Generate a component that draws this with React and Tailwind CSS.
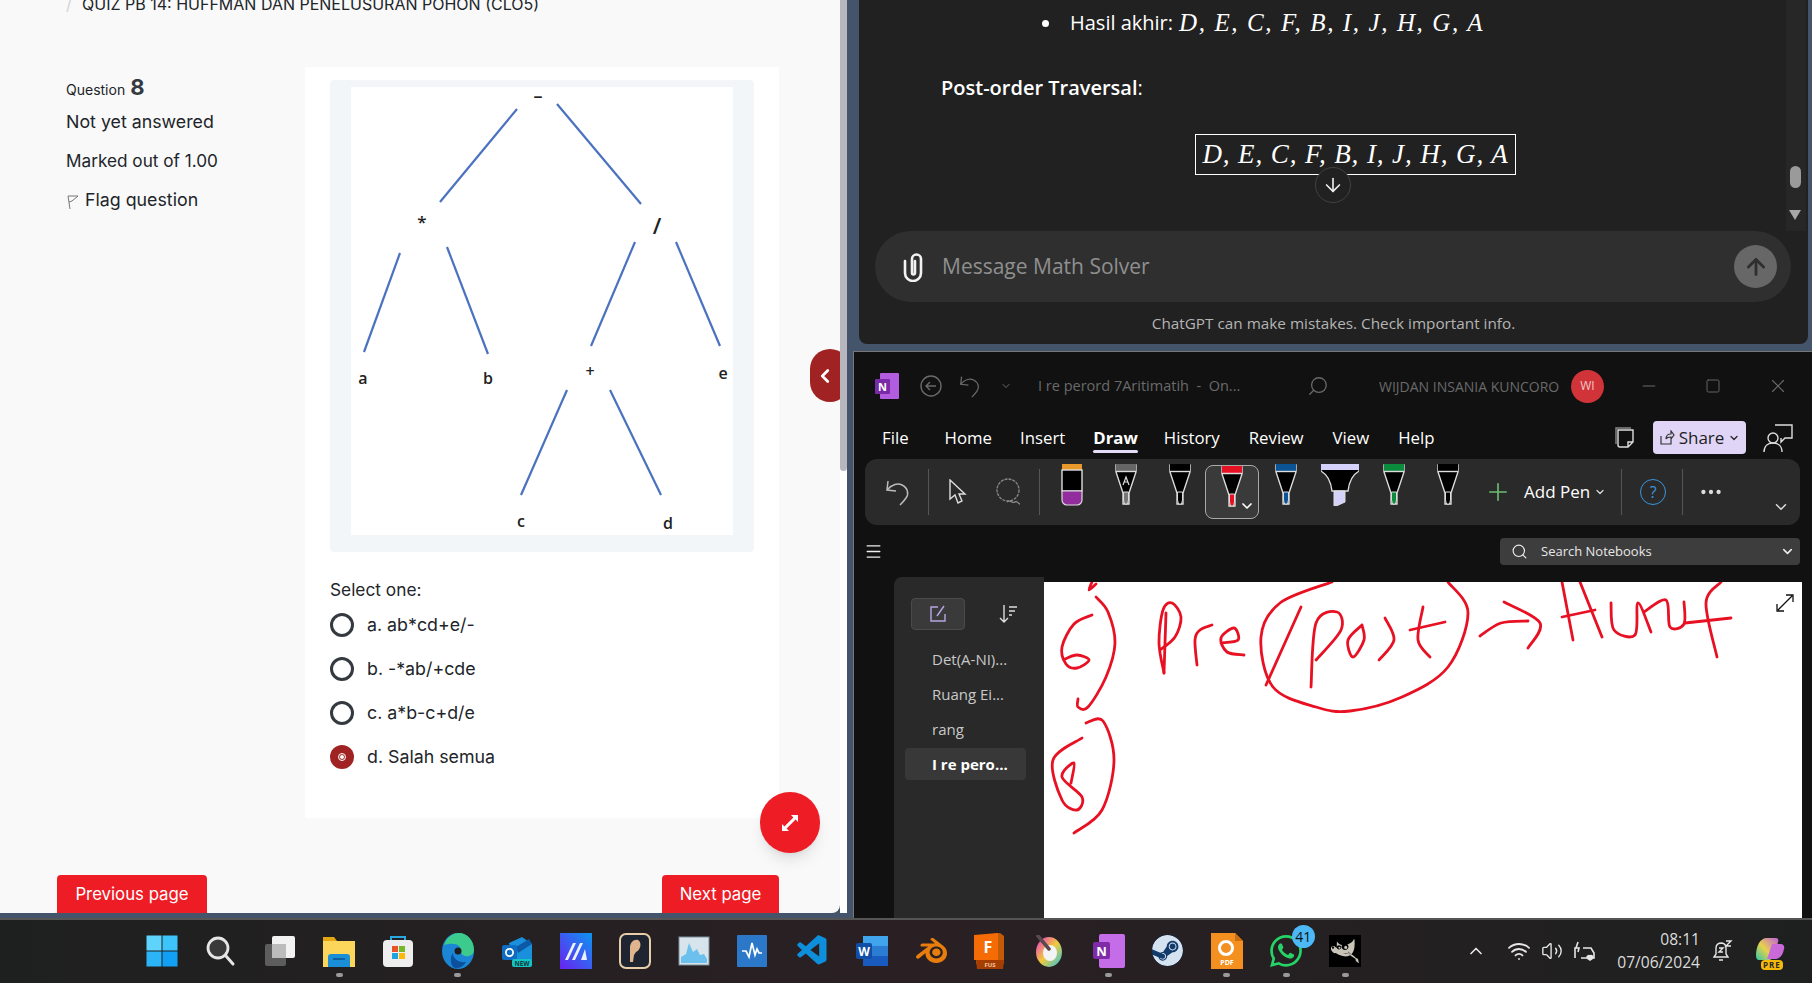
import { SiBlender, SiSteam, SiWhatsapp, SiGimp } from "react-icons/si";
import { VscVscode } from "react-icons/vsc";
import { ChevronLeft, ChevronDown, ChevronUp, ArrowDown, ArrowUp, Plus, Minus, Square, X, Menu, Search, MoreHorizontal, Wifi, Volume2 } from "lucide-react";

/* =============================
   HELPERS
============================== */

// puntos -> curva suave (catmull-rom) para la tinta
const inkPath = (pts) => {
  let d = `M${pts[0][0]} ${pts[0][1]}`;
  for (let i = 0; i < pts.length - 1; i++) {
    const p0 = pts[i - 1] || pts[i];
    const p1 = pts[i];
    const p2 = pts[i + 1];
    const p3 = pts[i + 2] || p2;
    const c1 = [p1[0] + (p2[0] - p0[0]) / 6, p1[1] + (p2[1] - p0[1]) / 6];
    const c2 = [p2[0] - (p3[0] - p1[0]) / 6, p2[1] - (p3[1] - p1[1]) / 6];
    d += ` C${c1[0]} ${c1[1]} ${c2[0]} ${c2[1]} ${p2[0]} ${p2[1]}`;
  }
  return d;
};

const strokes = [
  [[48, 0], [45, 8], [52, 2]],
  [[48, 33], [30, 42], [18, 65], [22, 82], [33, 86], [45, 78], [33, 73], [21, 77]],
  [[52, 15], [64, 30], [71, 61], [62, 95], [44, 125], [34, 125], [34, 117]],
  [[120, 91], [115, 61], [119, 28], [128, 21], [137, 35], [131, 55], [116, 68]],
  [[122, 31], [120, 91]],
  [[153, 83], [151, 58], [156, 48], [168, 43]],
  [[177, 61], [194, 58], [190, 46], [177, 56], [183, 70], [200, 73]],
  [[257, 25], [222, 103]],
  [[288, 0], [236, 21], [217, 55], [229, 105], [272, 125], [306, 129], [358, 115], [404, 85], [424, 31], [404, 0]],
  [[267, 105], [272, 41], [293, 30], [297, 48], [272, 78]],
  [[318, 43], [304, 58], [309, 75], [320, 58], [318, 43]],
  [[341, 36], [350, 58], [335, 78]],
  [[379, 25], [374, 58], [386, 75]],
  [[366, 48], [401, 40]],
  [[436, 54], [457, 41], [484, 39]],
  [[460, 20], [496, 41], [484, 66]],
  [[518, 0], [529, 58]],
  [[518, 35], [551, 28]],
  [[536, 0], [558, 55]],
  [[567, 21], [570, 48], [591, 53], [594, 21], [607, 50]],
  [[600, 30], [622, 18], [626, 45], [640, 42], [640, 20]],
  [[677, 0], [662, 21], [673, 75]],
  [[641, 41], [687, 36]],
  [[38, 156], [9, 178], [18, 218], [33, 228], [38, 215], [18, 195], [30, 181], [27, 201]],
  [[42, 141], [59, 139], [70, 178], [58, 228], [30, 251]],
];

function TreeImage() {
  const lines = [
    [166, 22, 89, 115], [206, 17, 290, 117], [49, 166, 13, 265], [96, 160, 137, 267],
    [284, 155, 240, 259], [325, 155, 369, 259], [216, 303, 170, 408], [259, 303, 310, 408],
  ];
  const labels = [
    ["–", 187, 15, 18], ["*", 71, 141, 17], ["/", 306, 147, 22], ["a", 12, 297, 16], ["b", 137, 297, 16],
    ["+", 239, 290, 16], ["e", 372, 292, 16], ["c", 170, 440, 16], ["d", 317, 442, 16],
  ];
  return (
    <svg viewBox="0 0 382 448" className="w-[382px] h-[448px] block bg-white">
      {lines.map((l, i) => (
        <line key={i} x1={l[0]} y1={l[1]} x2={l[2]} y2={l[3]} stroke="#4a72c0" strokeWidth="2.2" />
      ))}
      {labels.map((l, i) => (
        <text key={i} x={l[1]} y={l[2]} fontSize={l[3]} fontWeight="600" textAnchor="middle" fill="#222" fontFamily="Open Sans, sans-serif">{l[0]}</text>
      ))}
    </svg>
  );
}

function Radio({ label, checked }) {
  return (
    <div className="flex items-center h-[24px] gap-[13px] mb-[20px] last:mb-0">
      {checked ? (
        <span className="w-[24px] h-[24px] rounded-full bg-[#a02222] flex items-center justify-center">
          <span className="w-[6px] h-[6px] rounded-full bg-white border border-[#a02222] outline-1 outline-white"></span>
        </span>
      ) : (
        <span className="w-[24px] h-[24px] rounded-full border-[3px] border-[#343a40]"></span>
      )}
      <span>{label}</span>
    </div>
  );
}

function UndoCurl({ size, color, width }) {
  return (
    <svg width={size} height={size} viewBox="0 0 28 28" fill="none" stroke={color} strokeWidth={width}>
      <path d="M3 3l-1 9 9 1" />
      <path d="M2 12c5-6 11-7 15-5 6 3 7 9 4 13-2 3-4 5-6 7" />
    </svg>
  );
}

function Pen({ band, tip, a }) {
  return (
    <svg width="24" height="42" viewBox="0 0 24 42">
      <path d="M2 1h20v7l-7 21v11h-6V29L2 8z" fill="#000" stroke="#ddd" strokeWidth="1.4" />
      <rect x="2" y="0" width="20" height="7" fill={band} />
      <line x1="2" y1="7.5" x2="22" y2="7.5" stroke="#ddd" strokeWidth="1.4" />
      <path d="M9.5 28h5v8l-1 4h-3l-1-4z" fill={tip} stroke="#ddd" strokeWidth="1" />
      {a && <path d="M9 21l3-8 3 8M10 18h4" fill="none" stroke="#ddd" strokeWidth="1.2" />}
    </svg>
  );
}

function Highlighter() {
  return (
    <svg width="38" height="42" viewBox="0 0 38 42">
      <path d="M0 0h38v7c-7 4-10 11-11 20H11C10 18 7 11 0 7z" fill="#000" stroke="#ddd" strokeWidth="1.4" />
      <rect x="0" y="0" width="38" height="6" fill="#d4d2fa" />
      <path d="M13 27h11v11l-11 5z" fill="#d4d2fa" stroke="#ddd" strokeWidth="1" />
    </svg>
  );
}

function Eraser() {
  return (
    <svg width="22" height="42" viewBox="0 0 22 42">
      <rect x="1" y="0" width="20" height="6" fill="#e8992a" />
      <rect x="1" y="6" width="20" height="21" fill="#000" stroke="#ddd" strokeWidth="1.4" />
      <path d="M1 27h20v9a5 5 0 0 1-5 5H6a5 5 0 0 1-5-5z" fill="#912d9c" stroke="#ddd" strokeWidth="1.2" />
    </svg>
  );
}

/* =============================
   ICONOS DE LA BARRA DE TAREAS
============================== */
const TaskIcons = {
  start: (
    <svg width="32" height="32" viewBox="0 0 32 32">
      <rect x="0.5" y="0.5" width="15" height="15" fill="#5ed4fc" />
      <rect x="16.5" y="0.5" width="15" height="15" fill="#3cc4fb" />
      <rect x="0.5" y="16.5" width="15" height="15" fill="#2bb4f8" />
      <rect x="16.5" y="16.5" width="15" height="15" fill="#12a0f5" />
    </svg>
  ),
  search: (
    <svg width="32" height="32" viewBox="0 0 32 32">
      <circle cx="13" cy="13" r="10" fill="#3a3a3a" stroke="#e6e6e6" strokeWidth="2.8" />
      <path d="M21 21l7 8" stroke="#e6e6e6" strokeWidth="3" strokeLinecap="round" />
    </svg>
  ),
  tasks: (
    <svg width="32" height="32" viewBox="0 0 32 32">
      <rect x="1" y="9" width="21" height="22" rx="2" fill="#5d5d5d" />
      <rect x="8" y="1" width="23" height="22" rx="2" fill="#f2f2f2" />
      <rect x="8" y="9" width="14" height="14" fill="#bcbcbc" />
    </svg>
  ),
  files: (
    <svg width="32" height="32" viewBox="0 0 32 32">
      <path d="M0 2h11l3 4h18v26H0z" fill="#e5a711" />
      <rect x="0" y="6" width="32" height="26" fill="#fbd65b" />
      <path d="M5 32V22a3 3 0 0 1 3-3h16a3 3 0 0 1 3 3v10z" fill="#1b8ed8" />
      <rect x="10" y="23" width="12" height="2" fill="#0d5fa3" />
    </svg>
  ),
  store: (
    <svg width="32" height="32" viewBox="0 0 32 32">
      <path d="M9 6V2h14v4" fill="none" stroke="#28a7e0" strokeWidth="2" />
      <rect x="1" y="5" width="30" height="27" rx="4" fill="#eeeeee" />
      <rect x="10" y="11" width="6" height="6" fill="#e8532c" />
      <rect x="17" y="11" width="6" height="6" fill="#77b82a" />
      <rect x="10" y="18" width="6" height="6" fill="#1fa2e0" />
      <rect x="17" y="18" width="6" height="6" fill="#fbb90c" />
    </svg>
  ),
  edge: (
    <svg width="32" height="36" viewBox="0 0 32 36">
      <ellipse cx="16" cy="18" rx="16" ry="18" fill="#1b85d6" />
      <path d="M2 12C5 3 12 0 17 0c9 0 15 8 15 17 0 5-5 7-9 6-3-1-4-2-4-5 0-6-6-9-17-6z" fill="#3ccb8c" />
      <path d="M11 20c0 6 6 10 13 9-3 5-8 7-11 6-4-1-6-10-2-15z" fill="#0c4f9c" />
      <circle cx="16" cy="18" r="3.5" fill="#1e1e1e" />
    </svg>
  ),
  outlook: (
    <svg width="32" height="32" viewBox="0 0 32 32">
      <path d="M8 8l13-6 10 7v16H12z" fill="#1a8fdc" />
      <path d="M15 12l13-8 3 5-14 9z" fill="#0c5aa6" />
      <rect x="1" y="10" width="15" height="15" rx="2" fill="#0f6cc0" />
      <circle cx="8.5" cy="17.5" r="3.6" fill="none" stroke="#fff" strokeWidth="1.8" />
      <rect x="11" y="24" width="20" height="8" rx="2" fill="#15c4c4" />
      <text x="21" y="30.5" fontSize="6.5" fontWeight="700" textAnchor="middle" fill="#103a3a" fontFamily="Open Sans, sans-serif">NEW</text>
    </svg>
  ),
  ms: (
    <svg width="32" height="36" viewBox="0 0 32 36">
      <defs>
        <linearGradient id="msg" x1="1" y1="0" x2="0" y2="1">
          <stop offset="0" stopColor="#0c95f0" />
          <stop offset="1" stopColor="#6a22f2" />
        </linearGradient>
      </defs>
      <rect width="32" height="36" fill="url(#msg)" />
      <path d="M5 27L13 10h3L8 27zM12 27l8-17h3l-8 17zM21 27l4-11 2 11z" fill="#eaf1ff" />
    </svg>
  ),
  penbook: (
    <svg width="32" height="36" viewBox="0 0 32 36">
      <rect x="1" y="1" width="30" height="34" rx="6" fill="#1f2530" stroke="#e8cdaa" strokeWidth="2" />
      <path d="M11 29V15c0-6 4-9 8-8 4 2 3 10-2 12l-2 3-1 7z" fill="#e0b48c" />
    </svg>
  ),
  monitor: (
    <svg width="32" height="32" viewBox="0 0 32 32">
      <rect x="1" y="2" width="30" height="28" fill="#d8e4ec" stroke="#7d8d99" />
      <path d="M3 22l5-3 3-11 4 9 4-3 3 6 4-1 3 5v4H3z" fill="#6cc0ee" />
    </svg>
  ),
  wave: (
    <svg width="32" height="34" viewBox="0 0 32 34">
      <rect width="30" height="32" y="1" rx="1" fill="#2b78c8" />
      <path d="M5 17h4l3 6 3-14 3 12 2-6 2 4h3" fill="none" stroke="#fff" strokeWidth="1.7" />
    </svg>
  ),
  word: (
    <svg width="32" height="32" viewBox="0 0 32 32">
      <rect x="7" y="1" width="25" height="10" fill="#41a5ee" />
      <rect x="7" y="11" width="25" height="10" fill="#2b7cd3" />
      <rect x="7" y="21" width="25" height="10" fill="#185abd" />
      <rect x="0" y="8" width="16" height="16" rx="2" fill="#114ea6" />
      <text x="8" y="21" fontSize="12" fontWeight="700" textAnchor="middle" fill="#fff" fontFamily="Open Sans, sans-serif">W</text>
    </svg>
  ),
  fus: (
    <svg width="32" height="36" viewBox="0 0 32 36">
      <path d="M2 3l24-3 4 3v28H2z" fill="#c25a08" />
      <path d="M0 2l24-2v27H0z" fill="#f56b05" />
      <path d="M2 27h28l-1 9H3z" fill="#a53e02" />
      <text x="14" y="20" fontSize="16" fontWeight="700" textAnchor="middle" fill="#fff" fontFamily="Open Sans, sans-serif">F</text>
      <text x="16" y="34" fontSize="6" fontWeight="700" textAnchor="middle" fill="#f3c9a3" fontFamily="Open Sans, sans-serif">FUS</text>
    </svg>
  ),
  krita: (
    <svg width="32" height="32" viewBox="0 0 32 32">
      <defs>
        <linearGradient id="kg" x1="0" y1="0" x2="1" y2="1">
          <stop offset="0" stopColor="#e82fd5" />
          <stop offset="0.5" stopColor="#f2c93b" />
          <stop offset="1" stopColor="#22c5e8" />
        </linearGradient>
      </defs>
      <ellipse cx="16" cy="17" rx="13" ry="15" fill="url(#kg)" />
      <ellipse cx="17" cy="18" rx="7" ry="8" fill="#f4f4f4" />
      <path d="M5 1l11 13" stroke="#5a4a50" strokeWidth="3.5" strokeLinecap="round" />
    </svg>
  ),
  onenote: (
    <svg width="32" height="34" viewBox="0 0 32 34">
      <rect x="6" y="0" width="26" height="34" rx="2" fill="#c56ce8" />
      <rect x="0" y="8" width="17" height="17" rx="2" fill="#7f2aa8" />
      <text x="8.5" y="21.5" fontSize="13" fontWeight="700" textAnchor="middle" fill="#fff" fontFamily="Open Sans, sans-serif">N</text>
    </svg>
  ),
  foxit: (
    <svg width="32" height="36" viewBox="0 0 32 36">
      <path d="M0 0h24l8 8v28H0z" fill="#f49020" />
      <path d="M24 0v8h8z" fill="#c96f10" />
      <circle cx="15" cy="15" r="6.5" fill="none" stroke="#fff" strokeWidth="3" />
      <text x="16" y="32" fontSize="7" fontWeight="700" textAnchor="middle" fill="#fff" fontFamily="Open Sans, sans-serif">PDF</text>
    </svg>
  ),
};

const dock = [
  { id: "start", icon: TaskIcons.start },
  { id: "search", icon: TaskIcons.search },
  { id: "tasks", icon: TaskIcons.tasks },
  { id: "files", icon: TaskIcons.files, open: true },
  { id: "store", icon: TaskIcons.store },
  { id: "edge", icon: TaskIcons.edge, open: true },
  { id: "outlook", icon: TaskIcons.outlook },
  { id: "ms", icon: TaskIcons.ms },
  { id: "penbook", icon: TaskIcons.penbook },
  { id: "monitor", icon: TaskIcons.monitor },
  { id: "wave", icon: TaskIcons.wave },
  { id: "vscode", icon: <VscVscode size={36} color="#0e8fdc" /> },
  { id: "word", icon: TaskIcons.word },
  { id: "blender", icon: <SiBlender size={31} color="#e87d0d" /> },
  { id: "fus", icon: TaskIcons.fus },
  { id: "krita", icon: TaskIcons.krita },
  { id: "onenote", icon: TaskIcons.onenote, open: true },
  { id: "steam", icon: <SiSteam size={31} color="#d5e3f0" className="bg-[#123a6b] rounded-full" /> },
  { id: "foxit", icon: TaskIcons.foxit, open: true },
  { id: "whatsapp", icon: <SiWhatsapp size={32} color="#25d366" />, open: true, badge: "41" },
  { id: "gimp", icon: <span className="bg-black w-[32px] h-[32px] flex items-center justify-center"><SiGimp size={28} color="#c9c4b8" /></span>, open: true },
];

const tabs = ["File", "Home", "Insert", "Draw", "History", "Review", "View", "Help"];
const tabMargins = ["", "ml-[36px]", "ml-[28px]", "ml-[28px]", "ml-[26px]", "ml-[29px]", "ml-[29px]", "ml-[29px]"];

const serif = "font-['Liberation_Serif',serif] italic";
const answer = "D, E, C, F, B, I, J, H, G, A";

export default function App() {
  return (
    <div className="w-[1812px] h-[983px] overflow-hidden flex flex-col bg-[#44546a] font-['Open_Sans',sans-serif]">
      <div className="flex h-[918px] shrink-0">
        {/* ===== MOODLE ===== */}
        <div className="w-[847px] h-[913px] flex shrink-0 font-['Inter',sans-serif] text-[#212529]">
          <div className="w-[840px] relative bg-[#f9f9f9] rounded-br-lg overflow-hidden">
            <div className="-mt-[7px] pl-[66px] flex gap-[8px] text-[16px] leading-[22px] h-[74px]">
              <span className="text-[#ced4da] absolute left-[66px]">/</span>
              <span className="ml-[16px]">QUIZ PB 14: HUFFMAN DAN PENELUSURAN POHON (CLO5)</span>
            </div>

            <div className="flex">
              <div className="w-[305px] pl-[66px] pt-[4px] shrink-0">
                <div className="flex items-baseline gap-[5px] h-[31px]">
                  <span className="text-[14px]">Question</span>
                  <span className="text-[22px] font-bold text-[#343a40]">8</span>
                </div>
                <div className="text-[17.8px] leading-[39px]">Not yet answered</div>
                <div className="text-[17.2px] leading-[39px]">Marked out of 1.00</div>
                <div className="text-[17.8px] leading-[39px] flex items-center gap-[6px]">
                  <svg width="13" height="16" viewBox="0 0 13 16" className="mt-[4px]">
                    <path d="M2 2h10L6 7l-3 1M2 2l2 13" fill="none" stroke="#777" />
                  </svg>
                  Flag question
                </div>
              </div>

              <div className="w-[474px] h-[751px] bg-white px-[25px] pt-[13px] text-[17.8px] shrink-0">
                <div className="w-[424px] h-[472px] rounded bg-[#f3f6f9] px-[21px] pt-[7px]">
                  <TreeImage />
                </div>
                <div className="mt-[25px] mb-[8px] leading-[26px] text-[17.3px]">Select one:</div>
                <div className="pt-[2px]">
                  <Radio label="a. ab*cd+e/-" />
                  <Radio label="b. -*ab/+cde" />
                  <Radio label="c. a*b-c+d/e" />
                  <Radio label="d. Salah semua" checked />
                </div>
              </div>
            </div>

            <div className="absolute left-[57px] right-[61px] bottom-0 flex justify-between text-white text-[16.8px]">
              <button className="h-[38px] w-[150px] bg-[#ee1c25] rounded-t-sm pt-[2px]">Previous page</button>
              <button className="h-[38px] w-[117px] bg-[#ee1c25] rounded-t-sm pt-[2px]">Next page</button>
            </div>

            {/* tab lateral y boton flotante */}
            <div className="absolute left-[810px] top-[349px] w-[40px] h-[53px] rounded-full bg-[#a02222] flex items-center pl-[4px]">
              <ChevronLeft size={22} color="#fff" strokeWidth={3} />
            </div>
            <div className="absolute left-[760px] top-[792px] w-[60px] h-[61px] rounded-full bg-[#ee1c25] shadow-lg flex items-center justify-center">
              <svg width="20" height="20" viewBox="0 0 20 20" fill="#fff">
                <path d="M11 2h7v7l-2.4-2.4-9 9L9 18H2v-7l2.4 2.4 9-9z" />
              </svg>
            </div>
          </div>
          <div className="w-[7px] bg-white">
            <div className="h-[471px] rounded-b-sm bg-[#b7b7bd]"></div>
          </div>
        </div>

        <div className="flex-1 flex flex-col min-w-0">
          {/* ===== CHATGPT ===== */}
          <div className="h-[344px] ml-[12px] w-[949px] shrink-0 bg-[#212121] rounded-b-lg text-white relative overflow-hidden">
            <div className="h-[231px] relative">
              <div className="flex items-center pl-[183px] h-[46px]">
                <span className="w-[7px] h-[7px] rounded-full bg-white"></span>
                <span className="ml-[21px] text-[20px]">Hasil akhir:</span>
                <span className={`${serif} ml-[6px] text-[25px] tracking-[1.6px]`}>{answer}</span>
              </div>
              <div className="pl-[82px] mt-[29px] text-[20px] leading-[26px]"><b className="font-semibold">Post-order Traversal</b>:</div>
              <div className="flex mt-[33px] ml-[336px]">
                <div className={`${serif} w-[321px] h-[41px] border border-white text-[27px] leading-[38px] text-center whitespace-nowrap tracking-[0.9px]`}>{answer}</div>
              </div>
              <div className="absolute left-[456px] top-[167px] w-[36px] h-[36px] rounded-full border border-[#424242] bg-[#212121] flex items-center justify-center">
                <ArrowDown size={22} color="#ececec" strokeWidth={1.8} />
              </div>
              <div className="absolute right-[2px] top-0 bottom-0 w-[20px] bg-[#272727]">
                <div className="absolute left-[4px] top-[166px] w-[11px] h-[22px] rounded-full bg-[#9a9a9a]"></div>
                <div className="absolute left-[3px] top-[210px] border-x-[6px] border-t-[10px] border-x-transparent border-t-[#a8a8a8]"></div>
              </div>
            </div>

            <div className="ml-[16px] w-[916px] h-[71px] rounded-full bg-[#2f2f2f] flex items-center">
              <svg width="24" height="30" viewBox="0 0 24 30" fill="none" stroke="#f2f2f2" strokeWidth="2.6" strokeLinecap="round" className="ml-[26px] shrink-0">
                <path d="M4 9v12a8 8 0 0 0 16 0V7a4.5 4.5 0 0 0-9 0v14a1.5 1.5 0 0 0 3 0V9" />
              </svg>
              <span className="ml-[17px] text-[21px] text-[#8f8f8f] flex-1">Message Math Solver</span>
              <span className="mr-[14px] w-[43px] h-[43px] rounded-full bg-[#676767] flex items-center justify-center">
                <ArrowUp size={26} color="#2f2f2f" strokeWidth={2.6} />
              </span>
            </div>
            <div className="text-center text-[15.3px] text-[#b4b4b4] mt-[10px]">ChatGPT can make mistakes. Check important info.</div>
          </div>

          <div className="h-[8px] ml-[6px] shrink-0 border-b border-[#777]"></div>

          {/* ===== ONENOTE ===== */}
          <div className="flex-1 ml-[6px] w-[959px] border-l border-[#777] bg-[#111111] flex flex-col text-white overflow-hidden">
            {/* titulo */}
            <div className="h-[64px] shrink-0 flex items-center text-[#6a6a6a] text-[14.5px] pt-[4px]">
              <svg width="24" height="26" viewBox="0 0 24 26" className="ml-[21px] shrink-0">
                <rect x="5" y="0" width="19" height="26" rx="1" fill="#b25ce0" />
                <rect x="0" y="6" width="15" height="15" rx="1" fill="#7a2aa6" />
                <text x="7.5" y="17.5" fontSize="11" fontWeight="700" textAnchor="middle" fill="#fff">N</text>
              </svg>
              <svg width="22" height="22" viewBox="0 0 22 22" className="ml-[21px] shrink-0" fill="none" stroke="#6a6a6a" strokeWidth="1.4">
                <circle cx="11" cy="11" r="10" />
                <path d="M16 11H6M10 7l-4 4 4 4" />
              </svg>
              <span className="ml-[17px] shrink-0"><UndoCurl size={24} color="#6a6a6a" width={1.5} /></span>
              <ChevronDown size={12} color="#6a6a6a" className="ml-[17px] shrink-0" />
              <span className="ml-[26px] w-[269px] shrink-0 whitespace-pre">I re perord 7Aritimatih  -  On...</span>
              <Search size={22} color="#6a6a6a" strokeWidth={1.4} className="-scale-x-100 shrink-0" />
              <span className="ml-[50px] w-[192px] shrink-0 text-[14px] whitespace-nowrap">WIJDAN INSANIA KUNCORO</span>
              <span className="w-[33px] h-[33px] rounded-full bg-[#d13438] text-[#f2c6c6] text-[12px] flex items-center justify-center shrink-0">WI</span>
              <Minus size={20} color="#6a6a6a" strokeWidth={1.2} className="ml-[35px] shrink-0" />
              <Square size={16} color="#6a6a6a" strokeWidth={1.4} className="ml-[46px] shrink-0" />
              <X size={22} color="#6a6a6a" strokeWidth={1.2} className="ml-[46px] shrink-0" />
            </div>

            {/* pestanas */}
            <div className="h-[43px] shrink-0 flex items-center pl-[28px] text-[16.8px] relative">
              {tabs.map((t, i) => (
                <span key={t} className={`${tabMargins[i]} relative ${t === "Draw" ? "font-bold" : ""}`}>
                  {t}
                  {t === "Draw" && <span className="absolute left-0 right-0 -bottom-[3px] h-[3px] rounded bg-[#e5dcf8]"></span>}
                </span>
              ))}
              <div className="ml-auto flex items-center mr-[18px]">
                <svg width="22" height="22" viewBox="0 0 22 22" fill="none" stroke="#ddd" strokeWidth="1.4">
                  <path d="M3 3h15v12l-5 5H5a2 2 0 0 1-2-2zM13 20v-5h5" />
                  <path d="M1 17V1h15" stroke="#888" />
                </svg>
                <div className="ml-[16px] w-[93px] h-[33px] rounded bg-[#e0d4f7] text-[#1d1d1d] flex items-center justify-center gap-[4px] text-[17px]">
                  <svg width="16" height="16" viewBox="0 0 16 16" fill="none" stroke="#333" strokeWidth="1.2">
                    <path d="M2 6v8h10V9M7 9c0-4 3-5 5-5V1l3 4-3 4V7c-2 0-4 0-5 2z" />
                  </svg>
                  Share
                  <ChevronDown size={12} color="#222" strokeWidth={2.4} />
                </div>
                <svg width="32" height="30" viewBox="0 0 32 30" fill="none" stroke="#ddd" strokeWidth="1.4" className="ml-[16px]">
                  <circle cx="11" cy="15" r="5" />
                  <path d="M2 29c0-6 4-9 9-9s9 3 9 9M13 2h17v13h-7l-4 4v-4" />
                </svg>
              </div>
            </div>

            {/* ribbon */}
            <div className="ml-[11px] h-[66px] w-[935px] shrink-0 rounded-xl bg-[#2a2a2a] flex items-center text-[18px] pl-[20px] relative">
              <span className="shrink-0"><UndoCurl size={28} color="#bbb" width={1.5} /></span>
              <span className="ml-[15px] h-[46px] w-px bg-[#555] shrink-0"></span>
              <svg width="20" height="26" viewBox="0 0 20 26" fill="none" stroke="#ddd" strokeWidth="1.4" className="ml-[18px] shrink-0">
                <path d="M3 1v19l5-4 3 8 4-2-3-7h6z" />
              </svg>
              <svg width="28" height="28" viewBox="0 0 28 28" fill="none" stroke="#8a8a8a" strokeWidth="1.3" className="ml-[28px] shrink-0">
                <circle cx="13" cy="12" r="11" strokeDasharray="3 1" />
                <path d="M12 24c3-3 6 2 8 0s3 2 5 2" />
              </svg>
              <span className="ml-[16px] h-[46px] w-px bg-[#555] shrink-0"></span>
              <span className="ml-[21px] mt-[-14px] shrink-0"><Eraser /></span>
              <span className="ml-[31px] mt-[-14px] shrink-0"><Pen band="#666" tip="#777" a /></span>
              <span className="ml-[30px] mt-[-14px] shrink-0"><Pen band="#000" tip="#000" /></span>
              <span className="ml-[13px] shrink-0 w-[54px] h-[54px] rounded-lg border border-[#aaa] bg-[#3a3a3a] relative flex justify-center overflow-hidden">
                <Pen band="#e81123" tip="#e81123" />
                <ChevronDown size={16} color="#fff" strokeWidth={2.6} className="absolute right-[3px] bottom-[4px]" />
              </span>
              <span className="ml-[15px] mt-[-14px] shrink-0"><Pen band="#0b5394" tip="#0b5394" /></span>
              <span className="ml-[23px] mt-[-14px] shrink-0"><Highlighter /></span>
              <span className="ml-[23px] mt-[-14px] shrink-0"><Pen band="#0a8c3c" tip="#0a8c3c" /></span>
              <span className="ml-[30px] mt-[-14px] shrink-0"><Pen band="#000" tip="#000" /></span>
              <Plus size={28} color="#6cc070" strokeWidth={1.4} className="ml-[24px] shrink-0" />
              <span className="ml-[12px] shrink-0 whitespace-nowrap text-[17px]">Add Pen</span>
              <ChevronDown size={12} color="#ddd" strokeWidth={2.4} className="ml-[4px] shrink-0" />
              <span className="ml-[15px] h-[46px] w-px bg-[#555] shrink-0"></span>
              <span className="ml-[18px] w-[26px] h-[26px] rounded-full border-[1.5px] border-[#3a96dd] text-[#3a96dd] flex items-center justify-center text-[16px] shrink-0">?</span>
              <span className="ml-[16px] h-[46px] w-px bg-[#555] shrink-0"></span>
              <MoreHorizontal size={26} color="#ddd" className="ml-[15px] shrink-0" />
              <ChevronDown size={18} color="#ddd" className="absolute right-[10px] bottom-[9px]" />
            </div>

            {/* buscador */}
            <div className="h-[52px] shrink-0 flex items-start pt-[13px] pl-[10px] relative">
              <Menu size={19} color="#eee" strokeWidth={1.6} className="mt-[4px]" />
              <div className="absolute left-[646px] top-[13px] w-[300px] h-[27px] rounded bg-[#3d3d3d] flex items-center text-[13px] text-[#e8e8e8]">
                <Search size={17} color="#eee" strokeWidth={1.6} className="ml-[11px]" />
                <span className="ml-[13px] flex-1">Search Notebooks</span>
                <ChevronDown size={15} color="#eee" strokeWidth={2.4} className="mr-[5px]" />
              </div>
            </div>

            {/* contenido */}
            <div className="flex-1 flex pl-[40px] pr-[10px] min-h-0">
              <div className="w-[150px] shrink-0 bg-[#292929] rounded-tl-lg pt-[21px] pl-[11px] text-[15px] text-[#c8c8c8]">
                <div className="flex items-center pl-[6px]">
                  <span className="w-[54px] h-[32px] rounded bg-[#3a3a3a] border border-[#4a4a4a] flex items-center justify-center">
                    <svg width="18" height="18" viewBox="0 0 18 18" fill="none" stroke="#b9a6e4" strokeWidth="1.4">
                      <path d="M9 2H2v14h14V9M15 1L8 11" />
                    </svg>
                  </span>
                  <svg width="20" height="20" viewBox="0 0 20 20" fill="none" stroke="#ddd" strokeWidth="1.4" className="ml-[33px]">
                    <path d="M6 1v17M2 14l4 4 4-4M11 3h8M11 7h6M11 11h3" />
                  </svg>
                </div>
                <div className="mt-[12px] h-[35px] flex items-center pl-[27px]">Det(A-NI)...</div>
                <div className="h-[35px] flex items-center pl-[27px]">Ruang Ei...</div>
                <div className="h-[35px] flex items-center pl-[27px]">rang</div>
                <div className="mt-[1px] h-[32px] w-[121px] rounded bg-[#383838] flex items-center pl-[27px] font-bold text-white">I re pero...</div>
              </div>
              <div className="flex-1 bg-white relative mt-[5px]">
                <svg viewBox="0 0 758 336" className="w-full h-full" fill="none" stroke="#e81123" strokeWidth="2.8" strokeLinecap="round" strokeLinejoin="round">
                  {strokes.map((s, i) => <path key={i} d={inkPath(s)} />)}
                </svg>
                <svg width="18" height="18" viewBox="0 0 18 18" fill="none" stroke="#111" strokeWidth="1.3" className="absolute right-[8px] top-[12px]">
                  <path d="M2 16L16 2M10 1h7v7M1 10v7h7" />
                </svg>
              </div>
            </div>
          </div>
        </div>
      </div>

      {/* ===== BARRA DE TAREAS ===== */}
      <div className="flex-1 border-t-2 border-[#555] bg-gradient-to-r from-[#1e201f] via-[#2a2024] to-[#1e201f] flex items-center relative pl-[132px] pb-[2px]">
        {dock.map((d) => (
          <div key={d.id} className="w-[59.2px] h-[36px] flex items-center justify-center relative shrink-0">
            {d.icon}
            {d.open && <span className="absolute -bottom-[8px] left-[26px] w-[7px] h-[4px] rounded-full bg-[#9a9a9a]"></span>}
            {d.badge && <span className="absolute -top-[8px] right-[1px] w-[23px] h-[23px] rounded-full bg-[#4cb8f5] text-[#101010] text-[14px] flex items-center justify-center">{d.badge}</span>}
          </div>
        ))}
        <div className="ml-auto flex items-center text-[#e6e6e6] pr-[26px]">
          <ChevronUp size={20} strokeWidth={2} />
          <Wifi size={24} strokeWidth={1.8} className="ml-[21px]" />
          <Volume2 size={22} strokeWidth={1.5} className="ml-[10px]" />
          <svg width="24" height="22" viewBox="0 0 24 22" fill="none" stroke="#e6e6e6" strokeWidth="1.6" className="ml-[10px]">
            <path d="M2 18V8h3M10 8h8l3 5v5H8M5 2L3 8h3L5 12" />
            <path d="M17 20c-2-1-3-2-3-3a2 2 0 0 1 3-1 2 2 0 0 1 3 1c0 1-1 2-3 3z" fill="#e6e6e6" />
          </svg>
          <div className="ml-[20px] text-right text-[15.6px] leading-[23px] text-[#dcdcdc]">
            <div>08:11</div>
            <div>07/06/2024</div>
          </div>
          <svg width="22" height="24" viewBox="0 0 22 24" fill="none" stroke="#e6e6e6" strokeWidth="1.4" className="ml-[11px]">
            <path d="M3 18h14l-2-3V9a5 5 0 0 0-4-5C7 4 5 6 5 9v6zM8 21h4M8 9h4l-4 4h4M15 2h5l-5 5h5" />
          </svg>
          <span className="ml-[21px] relative w-[32px] h-[30px]">
            <svg width="32" height="26" viewBox="0 0 32 26">
              <defs>
                <linearGradient id="cop" x1="0" y1="1" x2="1" y2="0">
                  <stop offset="0" stopColor="#2fc6a8" />
                  <stop offset="0.45" stopColor="#e8d24c" />
                  <stop offset="1" stopColor="#c05ee0" />
                </linearGradient>
              </defs>
              <path d="M2 20C2 10 6 2 13 2h9c2 0 3 2 2 4l-3 12c-1 4-4 6-7 6H5c-2 0-3-2-3-4z" fill="url(#cop)" />
              <path d="M18 8h9c2 0 4 2 3 5-1 6-4 10-9 10h-8z" fill="#c96ad8" />
            </svg>
            <span className="absolute left-[7px] bottom-[-4px] h-[10px] px-[2px] rounded-sm bg-[#f5b90c] text-[#2a2a2a] text-[8px] leading-[10px] font-bold tracking-[1px]">PRE</span>
          </span>
        </div>
      </div>
    </div>
  );
}
